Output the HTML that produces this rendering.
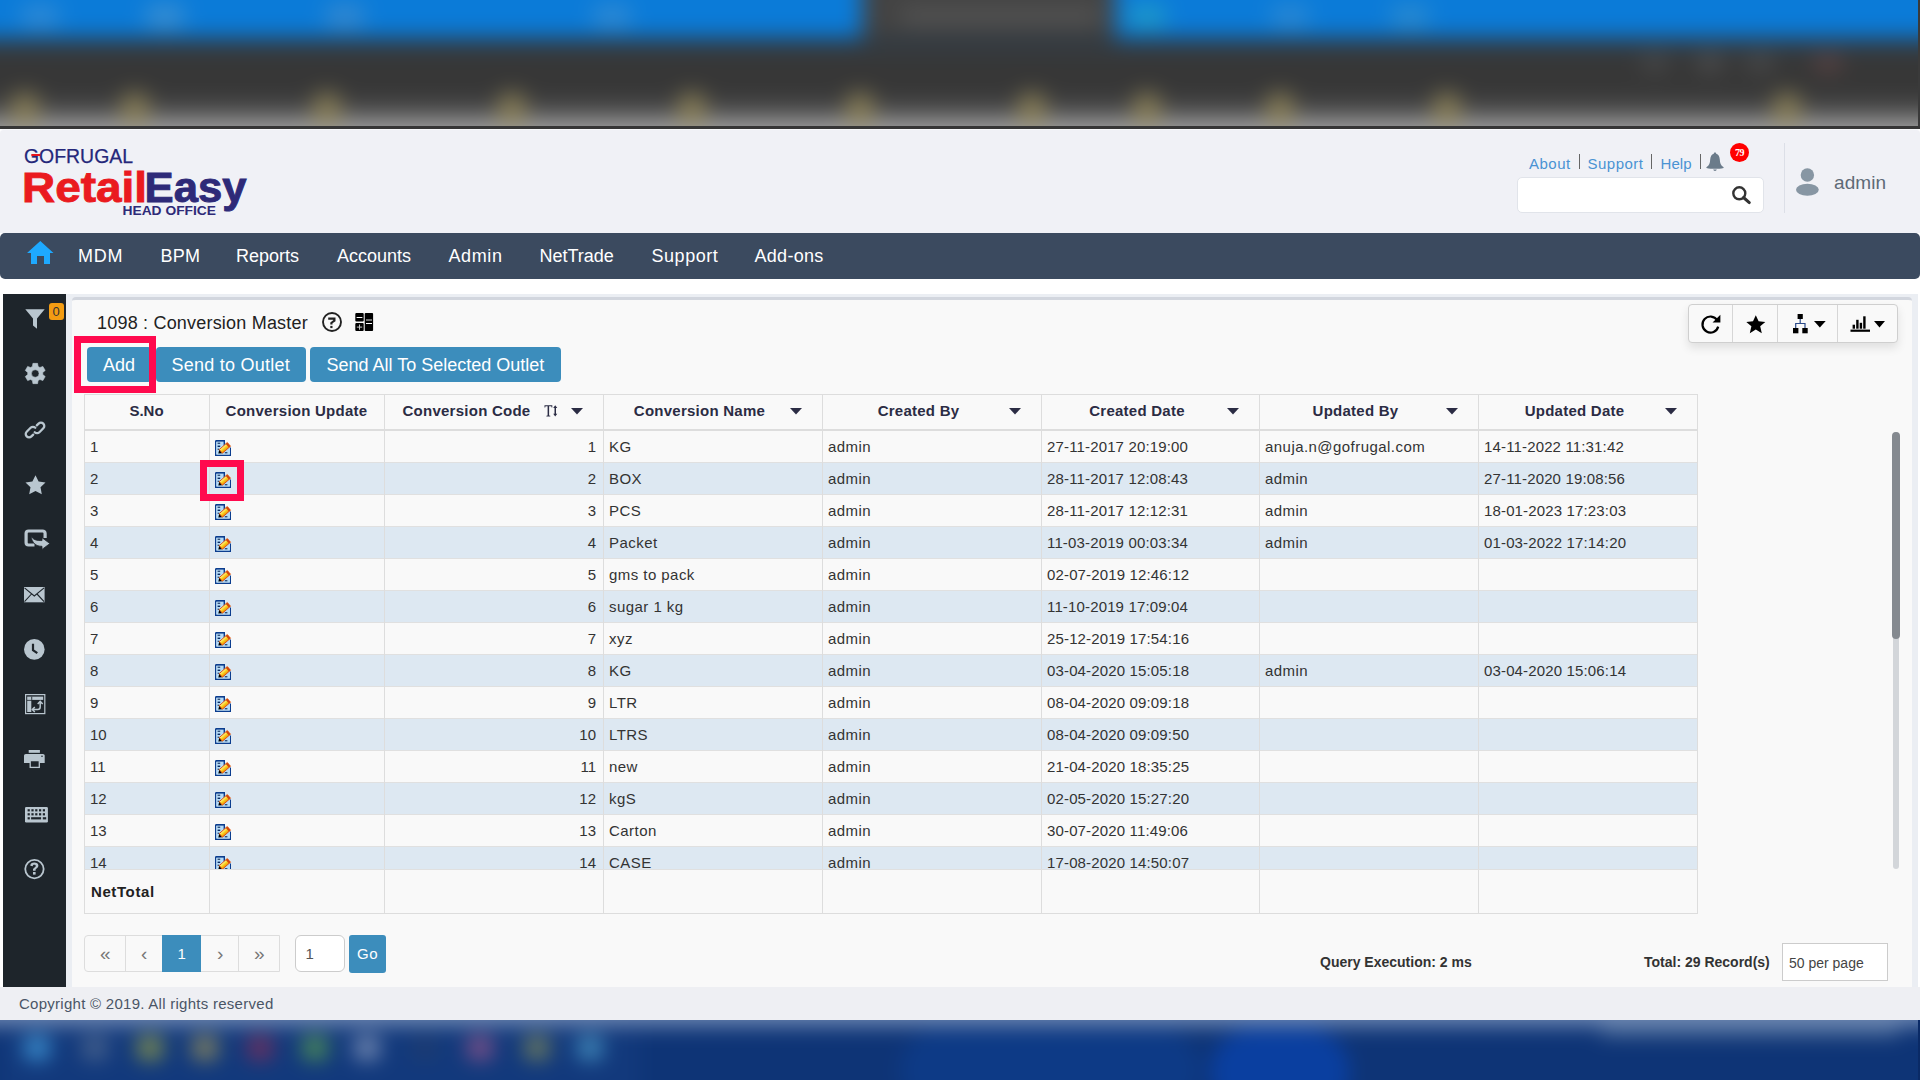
<!DOCTYPE html>
<html><head><meta charset="utf-8">
<style>
*{box-sizing:border-box}
html,body{margin:0;padding:0}
body{width:1920px;height:1080px;overflow:hidden;position:relative;background:#fff;font-family:"Liberation Sans",sans-serif;color:#333}
.abs{position:absolute}
.t{position:absolute;white-space:nowrap}
svg.abs{overflow:visible}
#top{position:absolute;left:0;top:0;width:1920px;height:126px;overflow:hidden;background:#3d3d3d}
#topin{position:absolute;left:-60px;top:-60px;width:2040px;height:246px;filter:blur(11px)}
#topin div{position:absolute}
#topline{position:absolute;left:0;top:126px;width:1920px;height:3px;background:#363636}
#topframe{position:absolute;left:1918px;top:0;width:2px;height:126px;background:#3a3a3a}
#hdrw{position:absolute;left:0;top:129px;width:1920px;height:104px;background:#fff}
#hdr{position:absolute;left:0;top:129px;width:1920px;height:104px;background:#f0f1f6;border-top:1px solid #f9fafc;border-radius:4px 4px 0 0}
#nav{position:absolute;left:0;top:233px;width:1920px;height:46px;background:#3b4a5f;border-radius:5px}
#side{position:absolute;left:3px;top:294px;width:63px;height:693px;background:#1e252b}
#gut{position:absolute;left:66px;top:294px;width:1852px;height:693px;background:#ebeef3}
#card{position:absolute;left:72px;top:297px;width:1840px;height:690px;background:#f9f9f9;border-top:3px solid #d2d6de;border-radius:4px 4px 0 0}
#foot{position:absolute;left:0;top:987px;width:1920px;height:33px;background:#eeeff3}
#task{position:absolute;left:0;top:1020px;width:1920px;height:60px;overflow:hidden;background:#0c3a85}
#taskin{position:absolute;left:-60px;top:-40px;width:2040px;height:160px;filter:blur(10px)}
#taskin div{position:absolute}
.btn{position:absolute;top:347px;height:35px;background:#3c8dbc;border-radius:4px}
.redbox{position:absolute;border:7px solid #ff0a4e;z-index:10}
#tbl{position:absolute;left:84px;top:394px;width:1614px;height:475px}
.bd{position:absolute;background:#ddd;z-index:3}
#thead{position:absolute;left:0;top:0;width:1614px;height:37px;border-bottom:2px solid #ddd}
.th{position:absolute;height:18px;line-height:15px;text-align:center;font-weight:bold;font-size:15px;color:#2b2c44;white-space:nowrap}
.sorti{display:inline-block;margin-left:14px;vertical-align:top;margin-top:1px}
.caret{position:absolute;fill:#2b2c44}
.vl{position:absolute;top:0;width:1px;height:35px;background:#ddd}
#tbody{position:absolute;left:0;top:37px;width:1614px;height:438px;overflow:hidden}
.tr{position:absolute;left:0;width:1614px;height:32px;background:#f9f9f9;border-bottom:1px solid #e0e0e0}
.tr.alt{background:#dde8f2}
.tr .t{color:#333}
.edit{position:absolute}
.vl2{position:absolute;top:0;width:1px;height:438px;background:#ddd;z-index:2}
#tfoot{position:absolute;left:84px;top:869px;width:1614px;height:45px;border:1px solid #ddd;border-top:1px solid #e0e0e0;background:#f9f9f9}
.vl3{position:absolute;top:0;width:1px;height:43px;background:#ddd}
.pg{position:absolute;top:935px;height:37px;border:1px solid #ddd;background:#f9f9f9}
</style></head><body>
<svg width="0" height="0" style="position:absolute">
 <defs>
  <linearGradient id="pg" x1="0" y1="-2.4" x2="0" y2="2.4" gradientUnits="userSpaceOnUse"><stop offset="0" stop-color="#fff6a0"/><stop offset="0.5" stop-color="#f9d21a"/><stop offset="1" stop-color="#f08a10"/></linearGradient>

 </defs>
</svg>

<!-- blurred top -->
<div id="top"><div id="topin">
<div style="left:0px;top:0px;width:2040px;height:246px;background:#3a3a3a;"></div>
<div style="left:0px;top:0px;width:922px;height:98px;background:#0b7bd8;"></div>
<div style="left:1175px;top:0px;width:925px;height:98px;background:#0b7bd8;"></div>
<div style="left:922px;top:0px;width:253px;height:95px;background:#434343;"></div>
<div style="left:960px;top:68px;width:200px;height:16px;background:#545454;border-radius:8px"></div>
<div style="left:80px;top:65px;width:40px;height:22px;background:#2f8ad6;border-radius:11px"></div>
<div style="left:205px;top:65px;width:40px;height:22px;background:#3a8fd2;border-radius:11px"></div>
<div style="left:385px;top:65px;width:40px;height:22px;background:#3589d0;border-radius:11px"></div>
<div style="left:652px;top:65px;width:40px;height:22px;background:#2f8ad4;border-radius:11px"></div>
<div style="left:1187px;top:65px;width:40px;height:22px;background:#1f9ac8;border-radius:11px"></div>
<div style="left:1450px;top:65px;width:40px;height:22px;background:#2a8ad0;border-radius:11px"></div>
<div style="left:1330px;top:65px;width:40px;height:22px;background:#2a88d4;border-radius:11px"></div>
<div style="left:0px;top:98px;width:2040px;height:12px;background:#2e3a45;"></div>
<div style="left:0px;top:120px;width:2040px;height:30px;background:#363636;"></div>
<div style="left:0px;top:160px;width:2040px;height:26px;background:linear-gradient(#3c3c3c,#555 50%,#9a9a9a);"></div>
<div style="left:0px;top:186px;width:2040px;height:60px;background:#a4a4a4;"></div>
<div style="left:71px;top:152px;width:28px;height:36px;background:#857b55;border-radius:14px"></div>
<div style="left:181px;top:152px;width:28px;height:36px;background:#857b55;border-radius:14px"></div>
<div style="left:373px;top:152px;width:28px;height:36px;background:#857b55;border-radius:14px"></div>
<div style="left:558px;top:152px;width:28px;height:36px;background:#857b55;border-radius:14px"></div>
<div style="left:738px;top:152px;width:28px;height:36px;background:#857b55;border-radius:14px"></div>
<div style="left:906px;top:152px;width:28px;height:36px;background:#857b55;border-radius:14px"></div>
<div style="left:1078px;top:152px;width:28px;height:36px;background:#857b55;border-radius:14px"></div>
<div style="left:1193px;top:152px;width:28px;height:36px;background:#857b55;border-radius:14px"></div>
<div style="left:1326px;top:152px;width:28px;height:36px;background:#857b55;border-radius:14px"></div>
<div style="left:1493px;top:152px;width:28px;height:36px;background:#857b55;border-radius:14px"></div>
<div style="left:1833px;top:152px;width:28px;height:36px;background:#857b55;border-radius:14px"></div>
<div style="left:1701px;top:115px;width:28px;height:16px;background:#4a4a4a;border-radius:8px"></div>
<div style="left:1756px;top:115px;width:28px;height:16px;background:#505050;border-radius:8px"></div>
<div style="left:1806px;top:115px;width:28px;height:16px;background:#4c4c4c;border-radius:8px"></div>
<div style="left:1874px;top:115px;width:28px;height:16px;background:#5e4444;border-radius:8px"></div>
</div></div>
<div id="topline"></div><div id="topframe"></div>

<!-- header -->
<div id="hdrw"></div>
<div id="hdr">
<svg class="abs" style="left:0;top:0" width="300" height="105" viewBox="0 130 300 105">
 <text x="24" y="163" font-family="Liberation Sans" font-size="20.5" textLength="109" lengthAdjust="spacingAndGlyphs" fill="#24277a" stroke="#24277a" stroke-width="0.25">GOFRUGAL</text>
 <rect x="31.3" y="154" width="9" height="2" fill="#e8141b"/>
 <text x="22" y="202" font-family="Liberation Sans" font-weight="bold" font-size="42.5" textLength="125" lengthAdjust="spacingAndGlyphs" fill="#ea1a1f" stroke="#ea1a1f" stroke-width="0.9">Retail</text>
 <text x="144.5" y="202" font-family="Liberation Sans" font-weight="bold" font-size="42.5" textLength="102" lengthAdjust="spacingAndGlyphs" fill="#2e2a78" stroke="#2e2a78" stroke-width="0.9">Easy</text>
 <text x="122.5" y="214.7" font-family="Liberation Sans" font-weight="bold" font-size="12.5" textLength="93.5" lengthAdjust="spacingAndGlyphs" fill="#2e2a78">HEAD OFFICE</text>
</svg>
<div class="t" style="left:1529px;top:26.00px;font-size:15px;line-height:15px;color:#4a93d3;font-weight:400;letter-spacing:0.5px">About</div>
<div class="t" style="left:1587.5px;top:26.00px;font-size:15px;line-height:15px;color:#4a93d3;font-weight:400;letter-spacing:0.5px">Support</div>
<div class="t" style="left:1660.5px;top:26.00px;font-size:15px;line-height:15px;color:#4a93d3;font-weight:400;letter-spacing:0.1px">Help</div>
<div class="abs" style="left:1579px;top:24px;width:1px;height:15px;background:#666"></div>
<div class="abs" style="left:1651px;top:24px;width:1px;height:15px;background:#666"></div>
<div class="abs" style="left:1700px;top:24px;width:1px;height:15px;background:#666"></div>
<svg class="abs" style="left:1706px;top:22px" width="18" height="19" viewBox="0 0 18 19"><path d="M9 0.5C9.8 0.5 10.2 1 10.2 1.8C12.6 2.3 13.6 4.6 13.8 7.5C14 11 14.6 13.2 17.6 15.2V15.9C15 16.5 12 16.7 9 16.7C6 16.7 3 16.5 0.4 15.9V15.2C3.4 13.2 4 11 4.2 7.5C4.4 4.6 5.4 2.3 7.8 1.8C7.8 1 8.2 0.5 9 0.5Z M7.2 17.5H10.8C10.6 18.3 9.9 18.9 9 18.9C8.1 18.9 7.4 18.3 7.2 17.5Z" fill="#6b7b8a"/></svg>
<div class="abs" style="left:1730px;top:13px;width:19px;height:19px;border-radius:50%;background:#ff0000"></div>
<div class="t" style="left:1735px;top:17.73px;font-size:10px;line-height:10px;color:#fff;font-weight:700;letter-spacing:-0.6px;font-family:'Liberation Serif',serif">79</div>
<div class="abs" style="left:1517px;top:47px;width:247px;height:36px;background:#fff;border:1px solid #e1e4ea;border-radius:5px"></div>
<svg class="abs" style="left:1732px;top:56px" width="19" height="18" viewBox="0 0 19 18"><circle cx="7.3" cy="7.3" r="6" fill="none" stroke="#333" stroke-width="2.4"/><path d="M11.5 11.5L17.3 16.6" stroke="#333" stroke-width="3" stroke-linecap="round"/></svg>
<div class="abs" style="left:1784px;top:13px;width:1px;height:70px;background:#dcdfe7"></div>
<svg class="abs" style="left:1795px;top:37px" width="25" height="30" viewBox="0 0 25 30"><circle cx="12.4" cy="8" r="6.7" fill="#8796a3"/><ellipse cx="12.4" cy="22.8" rx="11.4" ry="6" fill="#8796a3"/></svg>
<div class="t" style="left:1834px;top:42.67px;font-size:19px;line-height:19px;color:#5e6a77;font-weight:400;letter-spacing:0.1px">admin</div>
</div>

<div id="nav">
 <svg class="abs" style="left:27px;top:8px" width="27" height="24" viewBox="0 0 27 24"><path d="M13.3 0 L26.5 12 L23 12 L23 23 L17 23 L17 15 L10 15 L10 23 L4 23 L4 12 L0 12 Z" fill="#1ea9ff"/></svg>
<div class="t" style="left:78px;top:14.26px;font-size:18px;line-height:18px;color:#fff;font-weight:400;letter-spacing:0.8px">MDM</div>
<div class="t" style="left:160.5px;top:14.26px;font-size:18px;line-height:18px;color:#fff;font-weight:400;letter-spacing:0.3px">BPM</div>
<div class="t" style="left:236px;top:14.26px;font-size:18px;line-height:18px;color:#fff;font-weight:400;letter-spacing:0px">Reports</div>
<div class="t" style="left:337px;top:14.26px;font-size:18px;line-height:18px;color:#fff;font-weight:400;letter-spacing:0px">Accounts</div>
<div class="t" style="left:448.5px;top:14.26px;font-size:18px;line-height:18px;color:#fff;font-weight:400;letter-spacing:0.6px">Admin</div>
<div class="t" style="left:539.5px;top:14.26px;font-size:18px;line-height:18px;color:#fff;font-weight:400;letter-spacing:0px">NetTrade</div>
<div class="t" style="left:651.5px;top:14.26px;font-size:18px;line-height:18px;color:#fff;font-weight:400;letter-spacing:0.55px">Support</div>
<div class="t" style="left:754.5px;top:14.26px;font-size:18px;line-height:18px;color:#fff;font-weight:400;letter-spacing:0.3px">Add-ons</div>
</div>

<div id="side">
<svg class="abs" style="left:22px;top:15px" width="20" height="20" viewBox="0 0 20 20"><path d="M0.3 0.3H19.7L12 9.5V19.7L8 16.5V9.5Z" fill="#b9c6cf"/></svg>
<div class="abs" style="left:46px;top:9px;width:15px;height:17px;border-radius:3px;background:#f39c12"></div>
<div class="t" style="left:49.5px;top:11.00px;font-size:13px;line-height:13px;color:#333;font-weight:400;">0</div>
<svg class="abs" style="left:21.5px;top:69.30000000000001px" width="21" height="21" viewBox="0 0 21 21"><path d="M7.40 3.45 L7.91 0.37 L12.59 0.37 L13.10 3.45 L14.93 4.51 L17.86 3.41 L20.20 7.46 L17.78 9.44 L17.78 11.56 L20.20 13.54 L17.86 17.59 L14.93 16.49 L13.10 17.55 L12.59 20.63 L7.91 20.63 L7.40 17.55 L5.57 16.49 L2.64 17.59 L0.30 13.54 L2.72 11.56 L2.72 9.44 L0.30 7.46 L2.64 3.41 L5.57 4.51 Z M10.25 6.7A3.8 3.8 0 1 0 10.25 14.3A3.8 3.8 0 1 0 10.25 6.7Z" fill="#b9c6cf" fill-rule="evenodd" stroke="#b9c6cf" stroke-width="0.6" stroke-linejoin="round"/></svg>
<svg class="abs" style="left:21px;top:124.5px" width="22" height="22" viewBox="0 0 22 22"><g fill="none" stroke="#b9c6cf" stroke-width="2.3" stroke-linecap="round"><path d="M9.2 15.6L7.4 17.4A3.3 3.3 0 0 1 2.7 12.7L6.6 8.8A3.3 3.3 0 0 1 11.3 8.8" /><path d="M12.8 6.4L14.6 4.6A3.3 3.3 0 0 1 19.3 9.3L15.4 13.2A3.3 3.3 0 0 1 10.7 13.2"/></g></svg>
<svg class="abs" style="left:21.5px;top:180.5px" width="21" height="20" viewBox="0 0 21 20"><path d="M10.5 0.3L13.6 6.6L20.5 7.5L15.5 12.3L16.8 19.3L10.5 16L4.2 19.3L5.5 12.3L0.5 7.5L7.4 6.6Z" fill="#b9c6cf"/></svg>
<svg class="abs" style="left:21px;top:234.5px" width="27" height="22" viewBox="0 0 27 22"><path d="M10.5 16H4.6A2.5 2.5 0 0 1 2.1 13.5V4.5A2.5 2.5 0 0 1 4.6 2H18.6A2.5 2.5 0 0 1 21.1 4.5V9" fill="none" stroke="#b9c6cf" stroke-width="3.2"/><path d="M7 7C8.8 10.8 12.5 11.6 18 11.6V8.7L25.9 14.6L18 20.4V17.3C12 17.3 8 14 7 7Z" fill="#b9c6cf" stroke="#1e252b" stroke-width="0.8"/></svg>
<svg class="abs" style="left:21.4px;top:292.5px" width="21" height="15.5" viewBox="0 0 21 15.5"><rect x="0" y="0" width="20.6" height="15.3" fill="#b9c6cf"/><path d="M0.5 0.8L10.3 9L20.1 0.8 M0.5 14.6L7.5 7 M20.1 14.6L13 7" stroke="#1e252b" stroke-width="1.1" fill="none"/></svg>
<svg class="abs" style="left:21.4px;top:344.6px" width="21" height="21" viewBox="0 0 21 21"><circle cx="10.3" cy="10.4" r="10.3" fill="#b9c6cf"/><path d="M9 4.8V11.2L13.3 14.2" stroke="#1e252b" stroke-width="2.2" fill="none"/></svg>
<svg class="abs" style="left:21.7px;top:400px" width="21" height="21" viewBox="0 0 21 21"><rect x="0.6" y="0.6" width="19.2" height="19" fill="none" stroke="#b9c6cf" stroke-width="1.2"/><rect x="2.2" y="2.6" width="16" height="3.3" fill="#b9c6cf"/><rect x="6.3" y="2.6" width="0.9" height="3.3" fill="#1e252b"/><rect x="2.2" y="6.7" width="4.1" height="11.3" fill="#b9c6cf"/><path d="M15.2 8.5V13Q15.2 15.5 12.7 15.5H8 M12.7 10L15.2 7.4L17.7 10 M9.8 13L7.3 15.5L9.8 18" fill="none" stroke="#b9c6cf" stroke-width="1.5"/></svg>
<svg class="abs" style="left:21.4px;top:456px" width="21" height="19" viewBox="0 0 21 19"><rect x="4.7" y="0" width="11.2" height="2.8" fill="#b9c6cf"/><path d="M1.8 4H18.9C19.9 4 20.7 4.8 20.7 5.8V13.1H0V5.8C0 4.8 0.8 4 1.8 4Z" fill="#b9c6cf"/><rect x="6.2" y="10.6" width="9.1" height="6.8" fill="#1e252b" stroke="#b9c6cf" stroke-width="1.3"/><circle cx="18" cy="6.2" r="0.8" fill="#1e252b"/></svg>
<svg class="abs" style="left:21.6px;top:512.7px" width="23" height="16" viewBox="0 0 23 16"><rect x="0" y="0" width="22.9" height="15.4" rx="1.2" fill="#b9c6cf"/><rect x="2.6" y="2.2" width="2.2" height="2.2" fill="#1e252b"/><rect x="6.4" y="2.2" width="2.2" height="2.2" fill="#1e252b"/><rect x="10.2" y="2.2" width="2.2" height="2.2" fill="#1e252b"/><rect x="14.0" y="2.2" width="2.2" height="2.2" fill="#1e252b"/><rect x="17.8" y="2.2" width="2.2" height="2.2" fill="#1e252b"/><rect x="2.6" y="6.2" width="2.2" height="2.2" fill="#1e252b"/><rect x="6.4" y="6.2" width="2.2" height="2.2" fill="#1e252b"/><rect x="10.2" y="6.2" width="2.2" height="2.2" fill="#1e252b"/><rect x="14.0" y="6.2" width="2.2" height="2.2" fill="#1e252b"/><rect x="17.8" y="6.2" width="2.2" height="2.2" fill="#1e252b"/><rect x="2.6" y="10.2" width="2.2" height="2.2" fill="#1e252b"/><rect x="6.1" y="10.2" width="10" height="2.2" fill="#1e252b"/><rect x="17.8" y="10.2" width="3.4" height="2.2" fill="#1e252b"/></svg>
<svg class="abs" style="left:21.3px;top:565px" width="21" height="21" viewBox="0 0 21 21"><circle cx="10.45" cy="10.1" r="9.2" fill="none" stroke="#b9c6cf" stroke-width="1.8"/><path d="M6.3 6.8C6.3 4.8 7.9 3.6 10.3 3.6C12.7 3.6 14.4 4.8 14.4 6.8C14.4 8.8 12.2 9.4 11.6 10.6V11.8H9V10.2C9.6 8.4 11.8 8 11.8 6.9C11.8 6.2 11.2 5.8 10.3 5.8C9.4 5.8 8.8 6.3 8.8 7.2Z" fill="#b9c6cf"/><rect x="9" y="13" width="2.6" height="2.6" fill="#b9c6cf"/></svg>
</div>
<div id="gut"></div>
<div id="card"></div>

<div class="t" style="left:97px;top:313.76px;font-size:18px;line-height:18px;color:#222;font-weight:400;letter-spacing:0.2px">1098 : Conversion Master</div>
<svg class="abs" style="left:322px;top:312px" width="20" height="20" viewBox="0 0 20 20"><circle cx="10" cy="10" r="9" fill="none" stroke="#222" stroke-width="1.9"/><path d="M6.2 5.6H13.5V9.2L10.5 11.3V12.6H8.3V10.4L11.2 8.3V7.8H6.2Z" fill="#222"/><rect x="8.3" y="13.9" width="2.2" height="2.2" fill="#222"/></svg>
<svg class="abs" style="left:354.5px;top:313px" width="19" height="18" viewBox="0 0 19 18"><rect x="0.3" y="0.1" width="8.4" height="8.5" rx="1" fill="#000"/><rect x="0.3" y="10" width="8.4" height="8" rx="1" fill="#000"/><rect x="9.7" y="0.1" width="8.4" height="17.9" rx="1" fill="#000"/><rect x="1.6" y="4" width="5.8" height="1" fill="#fff"/><rect x="1.8" y="13.6" width="5.4" height="1" fill="#ccc"/><rect x="4" y="11.5" width="1" height="5.2" fill="#ccc"/><rect x="11" y="6.5" width="6" height="1" fill="#ddd"/><rect x="11" y="10" width="6" height="1" fill="#fff"/></svg>
<div class="btn" style="left:87px;width:65px"></div>
<div class="t" style="left:103px;top:355.56px;font-size:18px;line-height:18px;color:#fff;font-weight:400;">Add</div>
<div class="btn" style="left:156px;width:150px"></div>
<div class="t" style="left:171.5px;top:355.56px;font-size:18px;line-height:18px;color:#fff;font-weight:400;letter-spacing:0.25px">Send to Outlet</div>
<div class="btn" style="left:310px;width:251px"></div>
<div class="t" style="left:326.5px;top:355.56px;font-size:18px;line-height:18px;color:#fff;font-weight:400;">Send All To Selected Outlet</div>
<div class="redbox" style="left:74px;top:336px;width:82px;height:57px"></div>
<div class="abs" style="left:1688px;top:304px;width:210px;height:39px;border:1px solid #cfcfcf;border-radius:4px;background:#f9f9f9;box-shadow:0 5px 10px rgba(0,0,0,0.10)"></div>
<div class="abs" style="left:1732px;top:305px;width:1px;height:37px;background:#d6d6d6"></div>
<div class="abs" style="left:1777px;top:305px;width:1px;height:37px;background:#d6d6d6"></div>
<div class="abs" style="left:1837px;top:305px;width:1px;height:37px;background:#d6d6d6"></div>
<svg class="abs" style="left:1701px;top:314px" width="20" height="20" viewBox="0 0 20 20"><path d="M16.2 6.2A8 8 0 1 0 17.2 12.6" fill="none" stroke="#000" stroke-width="2.2"/><path d="M19.4 0.8V8.6H11.6Z" fill="#000"/></svg>
<svg class="abs" style="left:1745.5px;top:314.5px" width="20" height="19" viewBox="0 0 20 19"><path d="M9.8 0.3L12.6 6.3L19.3 6.9L14.2 11.3L15.8 18.2L9.8 14.6L3.8 18.2L5.4 11.3L0.3 6.9L7 6.3Z" fill="#000"/></svg>
<svg class="abs" style="left:1793px;top:314px" width="15" height="20" viewBox="0 0 15 20"><rect x="4.6" y="0" width="5.2" height="5" fill="#000"/><rect x="0" y="14" width="5.4" height="5.3" fill="#000"/><rect x="9.3" y="14" width="5.4" height="5.3" fill="#000"/><path d="M7.2 5V9.5M2.7 14V9.5H12V14" stroke="#2a4a8a" stroke-width="1.2" fill="none"/></svg>
<svg class="abs" style="left:1813.5px;top:321px" width="12" height="7" viewBox="0 0 12 7"><path d="M0 0H11.7L5.85 6.6Z" fill="#000"/></svg>
<svg class="abs" style="left:1850px;top:316px" width="21" height="16" viewBox="0 0 21 16"><rect x="0.5" y="13.6" width="19.5" height="2.2" fill="#000"/><rect x="2.6" y="8.7" width="2.4" height="4" fill="#000"/><rect x="6.2" y="3.8" width="2.4" height="8.9" fill="#000"/><rect x="9.7" y="6.8" width="2.4" height="5.9" fill="#000"/><rect x="13.2" y="0.3" width="2.4" height="12.4" fill="#000"/></svg>
<svg class="abs" style="left:1874px;top:321px" width="12" height="7" viewBox="0 0 12 7"><path d="M0 0H11L5.5 6.6Z" fill="#000"/></svg>

<div id="tbl">
 <div id="thead">
<div class="th" style="left:0px;width:125px;top:9.00px;letter-spacing:0px">S.No</div>
<div class="th" style="left:125px;width:175px;top:9.00px;letter-spacing:0.25px">Conversion Update</div>
<div class="th" style="left:300px;width:193px;top:9.00px;letter-spacing:0.25px">Conversion Code<span class="sorti"><svg width="14" height="12" viewBox="0 0 14 12"><path d="M0.5 0.3H8.3V2.6H7.6L7.3 1.3H5.1V10.5L6.3 10.8V11.5H2.4V10.8L3.6 10.5V1.3H1.5L1.2 2.6H0.5Z M11.2 0.3L13.3 3H12V8.7H13.3L11.2 11.5L9.2 8.7H10.5V3H9.2Z" fill="#2b2c44"/></svg></span></div>
<svg class="caret" style="left:487px;top:14.4px" width="12" height="7" viewBox="0 0 12 7"><path d="M0 0H12L6 6.5Z"/></svg>
<div class="th" style="left:519px;width:193px;top:9.00px;letter-spacing:0.25px">Conversion Name</div>
<svg class="caret" style="left:706px;top:14.4px" width="12" height="7" viewBox="0 0 12 7"><path d="M0 0H12L6 6.5Z"/></svg>
<div class="th" style="left:738px;width:193px;top:9.00px;letter-spacing:0.25px">Created By</div>
<svg class="caret" style="left:925px;top:14.4px" width="12" height="7" viewBox="0 0 12 7"><path d="M0 0H12L6 6.5Z"/></svg>
<div class="th" style="left:957px;width:192px;top:9.00px;letter-spacing:0.25px">Created Date</div>
<svg class="caret" style="left:1143px;top:14.4px" width="12" height="7" viewBox="0 0 12 7"><path d="M0 0H12L6 6.5Z"/></svg>
<div class="th" style="left:1175px;width:193px;top:9.00px;letter-spacing:0.25px">Updated By</div>
<svg class="caret" style="left:1362px;top:14.4px" width="12" height="7" viewBox="0 0 12 7"><path d="M0 0H12L6 6.5Z"/></svg>
<div class="th" style="left:1394px;width:193px;top:9.00px;letter-spacing:0.25px">Updated Date</div>
<svg class="caret" style="left:1581px;top:14.4px" width="12" height="7" viewBox="0 0 12 7"><path d="M0 0H12L6 6.5Z"/></svg>
<div class="vl" style="left:125px"></div>
<div class="vl" style="left:300px"></div>
<div class="vl" style="left:519px"></div>
<div class="vl" style="left:738px"></div>
<div class="vl" style="left:957px"></div>
<div class="vl" style="left:1175px"></div>
<div class="vl" style="left:1394px"></div>
 </div>
 <div class="bd" style="left:0;top:0;width:1614px;height:1px"></div>
 <div class="bd" style="left:0;top:0;width:1px;height:475px"></div>
 <div class="bd" style="left:1613px;top:0;width:1px;height:475px"></div>
 <div id="tbody">
<div class="tr" style="top:0px"><div class="t" style="left:6px;top:8.10px;font-size:15px;line-height:15px;color:#333;font-weight:400;">1</div><svg class="edit" style="left:131px;top:9px" width="17" height="17" viewBox="0 0 17 17" overflow="visible"><path d="M0.7 0.7H9.3 M0.7 0.7V15.3H15.3V7.5" fill="none" stroke="#0b3d8e" stroke-width="1.4"/>   <path d="M1.4 1.4H9.3L15 7.5V14.6H1.4Z" fill="#b4dbf7"/>   <path d="M0.7 0.7H9.3V6" fill="none" stroke="#0b3d8e" stroke-width="1.4"/>   <rect x="2.6" y="2.6" width="2.6" height="1.4" fill="#33507a"/>   <rect x="2.6" y="5.6" width="2.6" height="1.4" fill="#0b2a60"/>   <rect x="2.6" y="8.6" width="1.6" height="1.4" fill="#33507a"/>   <rect x="9.8" y="12" width="2.6" height="1.4" fill="#33507a"/>   <g transform="translate(3.3 13.6) rotate(-41)">    <path d="M0 0L3.4 -2.4V2.4Z" fill="#000"/>    <rect x="3.4" y="-2.4" width="10.6" height="4.8" fill="url(#pg)" stroke="#e0520e" stroke-width="0.9"/>    <rect x="12" y="-2.4" width="2" height="4.8" fill="#d2450c"/>   </g></svg><div class="t" style="right:1102px;top:8.10px;font-size:15px;line-height:15px;color:#333;font-weight:400;">1</div><div class="t" style="left:525px;top:8.10px;font-size:15px;line-height:15px;color:#333;font-weight:400;letter-spacing:0.45px">KG</div><div class="t" style="left:744px;top:8.10px;font-size:15px;line-height:15px;color:#333;font-weight:400;letter-spacing:0.45px">admin</div><div class="t" style="left:963px;top:8.10px;font-size:15px;line-height:15px;color:#333;font-weight:400;letter-spacing:0.15px">27-11-2017 20:19:00</div><div class="t" style="left:1181px;top:8.10px;font-size:15px;line-height:15px;color:#333;font-weight:400;letter-spacing:0.45px">anuja.n@gofrugal.com</div><div class="t" style="left:1400px;top:8.10px;font-size:15px;line-height:15px;color:#333;font-weight:400;letter-spacing:0.15px">14-11-2022 11:31:42</div></div>
<div class="tr alt" style="top:32px"><div class="t" style="left:6px;top:8.10px;font-size:15px;line-height:15px;color:#333;font-weight:400;">2</div><svg class="edit" style="left:131px;top:9px" width="17" height="17" viewBox="0 0 17 17" overflow="visible"><path d="M0.7 0.7H9.3 M0.7 0.7V15.3H15.3V7.5" fill="none" stroke="#0b3d8e" stroke-width="1.4"/>   <path d="M1.4 1.4H9.3L15 7.5V14.6H1.4Z" fill="#b4dbf7"/>   <path d="M0.7 0.7H9.3V6" fill="none" stroke="#0b3d8e" stroke-width="1.4"/>   <rect x="2.6" y="2.6" width="2.6" height="1.4" fill="#33507a"/>   <rect x="2.6" y="5.6" width="2.6" height="1.4" fill="#0b2a60"/>   <rect x="2.6" y="8.6" width="1.6" height="1.4" fill="#33507a"/>   <rect x="9.8" y="12" width="2.6" height="1.4" fill="#33507a"/>   <g transform="translate(3.3 13.6) rotate(-41)">    <path d="M0 0L3.4 -2.4V2.4Z" fill="#000"/>    <rect x="3.4" y="-2.4" width="10.6" height="4.8" fill="url(#pg)" stroke="#e0520e" stroke-width="0.9"/>    <rect x="12" y="-2.4" width="2" height="4.8" fill="#d2450c"/>   </g></svg><div class="t" style="right:1102px;top:8.10px;font-size:15px;line-height:15px;color:#333;font-weight:400;">2</div><div class="t" style="left:525px;top:8.10px;font-size:15px;line-height:15px;color:#333;font-weight:400;letter-spacing:0.45px">BOX</div><div class="t" style="left:744px;top:8.10px;font-size:15px;line-height:15px;color:#333;font-weight:400;letter-spacing:0.45px">admin</div><div class="t" style="left:963px;top:8.10px;font-size:15px;line-height:15px;color:#333;font-weight:400;letter-spacing:0.15px">28-11-2017 12:08:43</div><div class="t" style="left:1181px;top:8.10px;font-size:15px;line-height:15px;color:#333;font-weight:400;letter-spacing:0.45px">admin</div><div class="t" style="left:1400px;top:8.10px;font-size:15px;line-height:15px;color:#333;font-weight:400;letter-spacing:0.15px">27-11-2020 19:08:56</div></div>
<div class="tr" style="top:64px"><div class="t" style="left:6px;top:8.10px;font-size:15px;line-height:15px;color:#333;font-weight:400;">3</div><svg class="edit" style="left:131px;top:9px" width="17" height="17" viewBox="0 0 17 17" overflow="visible"><path d="M0.7 0.7H9.3 M0.7 0.7V15.3H15.3V7.5" fill="none" stroke="#0b3d8e" stroke-width="1.4"/>   <path d="M1.4 1.4H9.3L15 7.5V14.6H1.4Z" fill="#b4dbf7"/>   <path d="M0.7 0.7H9.3V6" fill="none" stroke="#0b3d8e" stroke-width="1.4"/>   <rect x="2.6" y="2.6" width="2.6" height="1.4" fill="#33507a"/>   <rect x="2.6" y="5.6" width="2.6" height="1.4" fill="#0b2a60"/>   <rect x="2.6" y="8.6" width="1.6" height="1.4" fill="#33507a"/>   <rect x="9.8" y="12" width="2.6" height="1.4" fill="#33507a"/>   <g transform="translate(3.3 13.6) rotate(-41)">    <path d="M0 0L3.4 -2.4V2.4Z" fill="#000"/>    <rect x="3.4" y="-2.4" width="10.6" height="4.8" fill="url(#pg)" stroke="#e0520e" stroke-width="0.9"/>    <rect x="12" y="-2.4" width="2" height="4.8" fill="#d2450c"/>   </g></svg><div class="t" style="right:1102px;top:8.10px;font-size:15px;line-height:15px;color:#333;font-weight:400;">3</div><div class="t" style="left:525px;top:8.10px;font-size:15px;line-height:15px;color:#333;font-weight:400;letter-spacing:0.45px">PCS</div><div class="t" style="left:744px;top:8.10px;font-size:15px;line-height:15px;color:#333;font-weight:400;letter-spacing:0.45px">admin</div><div class="t" style="left:963px;top:8.10px;font-size:15px;line-height:15px;color:#333;font-weight:400;letter-spacing:0.15px">28-11-2017 12:12:31</div><div class="t" style="left:1181px;top:8.10px;font-size:15px;line-height:15px;color:#333;font-weight:400;letter-spacing:0.45px">admin</div><div class="t" style="left:1400px;top:8.10px;font-size:15px;line-height:15px;color:#333;font-weight:400;letter-spacing:0.15px">18-01-2023 17:23:03</div></div>
<div class="tr alt" style="top:96px"><div class="t" style="left:6px;top:8.10px;font-size:15px;line-height:15px;color:#333;font-weight:400;">4</div><svg class="edit" style="left:131px;top:9px" width="17" height="17" viewBox="0 0 17 17" overflow="visible"><path d="M0.7 0.7H9.3 M0.7 0.7V15.3H15.3V7.5" fill="none" stroke="#0b3d8e" stroke-width="1.4"/>   <path d="M1.4 1.4H9.3L15 7.5V14.6H1.4Z" fill="#b4dbf7"/>   <path d="M0.7 0.7H9.3V6" fill="none" stroke="#0b3d8e" stroke-width="1.4"/>   <rect x="2.6" y="2.6" width="2.6" height="1.4" fill="#33507a"/>   <rect x="2.6" y="5.6" width="2.6" height="1.4" fill="#0b2a60"/>   <rect x="2.6" y="8.6" width="1.6" height="1.4" fill="#33507a"/>   <rect x="9.8" y="12" width="2.6" height="1.4" fill="#33507a"/>   <g transform="translate(3.3 13.6) rotate(-41)">    <path d="M0 0L3.4 -2.4V2.4Z" fill="#000"/>    <rect x="3.4" y="-2.4" width="10.6" height="4.8" fill="url(#pg)" stroke="#e0520e" stroke-width="0.9"/>    <rect x="12" y="-2.4" width="2" height="4.8" fill="#d2450c"/>   </g></svg><div class="t" style="right:1102px;top:8.10px;font-size:15px;line-height:15px;color:#333;font-weight:400;">4</div><div class="t" style="left:525px;top:8.10px;font-size:15px;line-height:15px;color:#333;font-weight:400;letter-spacing:0.45px">Packet</div><div class="t" style="left:744px;top:8.10px;font-size:15px;line-height:15px;color:#333;font-weight:400;letter-spacing:0.45px">admin</div><div class="t" style="left:963px;top:8.10px;font-size:15px;line-height:15px;color:#333;font-weight:400;letter-spacing:0.15px">11-03-2019 00:03:34</div><div class="t" style="left:1181px;top:8.10px;font-size:15px;line-height:15px;color:#333;font-weight:400;letter-spacing:0.45px">admin</div><div class="t" style="left:1400px;top:8.10px;font-size:15px;line-height:15px;color:#333;font-weight:400;letter-spacing:0.15px">01-03-2022 17:14:20</div></div>
<div class="tr" style="top:128px"><div class="t" style="left:6px;top:8.10px;font-size:15px;line-height:15px;color:#333;font-weight:400;">5</div><svg class="edit" style="left:131px;top:9px" width="17" height="17" viewBox="0 0 17 17" overflow="visible"><path d="M0.7 0.7H9.3 M0.7 0.7V15.3H15.3V7.5" fill="none" stroke="#0b3d8e" stroke-width="1.4"/>   <path d="M1.4 1.4H9.3L15 7.5V14.6H1.4Z" fill="#b4dbf7"/>   <path d="M0.7 0.7H9.3V6" fill="none" stroke="#0b3d8e" stroke-width="1.4"/>   <rect x="2.6" y="2.6" width="2.6" height="1.4" fill="#33507a"/>   <rect x="2.6" y="5.6" width="2.6" height="1.4" fill="#0b2a60"/>   <rect x="2.6" y="8.6" width="1.6" height="1.4" fill="#33507a"/>   <rect x="9.8" y="12" width="2.6" height="1.4" fill="#33507a"/>   <g transform="translate(3.3 13.6) rotate(-41)">    <path d="M0 0L3.4 -2.4V2.4Z" fill="#000"/>    <rect x="3.4" y="-2.4" width="10.6" height="4.8" fill="url(#pg)" stroke="#e0520e" stroke-width="0.9"/>    <rect x="12" y="-2.4" width="2" height="4.8" fill="#d2450c"/>   </g></svg><div class="t" style="right:1102px;top:8.10px;font-size:15px;line-height:15px;color:#333;font-weight:400;">5</div><div class="t" style="left:525px;top:8.10px;font-size:15px;line-height:15px;color:#333;font-weight:400;letter-spacing:0.45px">gms to pack</div><div class="t" style="left:744px;top:8.10px;font-size:15px;line-height:15px;color:#333;font-weight:400;letter-spacing:0.45px">admin</div><div class="t" style="left:963px;top:8.10px;font-size:15px;line-height:15px;color:#333;font-weight:400;letter-spacing:0.15px">02-07-2019 12:46:12</div></div>
<div class="tr alt" style="top:160px"><div class="t" style="left:6px;top:8.10px;font-size:15px;line-height:15px;color:#333;font-weight:400;">6</div><svg class="edit" style="left:131px;top:9px" width="17" height="17" viewBox="0 0 17 17" overflow="visible"><path d="M0.7 0.7H9.3 M0.7 0.7V15.3H15.3V7.5" fill="none" stroke="#0b3d8e" stroke-width="1.4"/>   <path d="M1.4 1.4H9.3L15 7.5V14.6H1.4Z" fill="#b4dbf7"/>   <path d="M0.7 0.7H9.3V6" fill="none" stroke="#0b3d8e" stroke-width="1.4"/>   <rect x="2.6" y="2.6" width="2.6" height="1.4" fill="#33507a"/>   <rect x="2.6" y="5.6" width="2.6" height="1.4" fill="#0b2a60"/>   <rect x="2.6" y="8.6" width="1.6" height="1.4" fill="#33507a"/>   <rect x="9.8" y="12" width="2.6" height="1.4" fill="#33507a"/>   <g transform="translate(3.3 13.6) rotate(-41)">    <path d="M0 0L3.4 -2.4V2.4Z" fill="#000"/>    <rect x="3.4" y="-2.4" width="10.6" height="4.8" fill="url(#pg)" stroke="#e0520e" stroke-width="0.9"/>    <rect x="12" y="-2.4" width="2" height="4.8" fill="#d2450c"/>   </g></svg><div class="t" style="right:1102px;top:8.10px;font-size:15px;line-height:15px;color:#333;font-weight:400;">6</div><div class="t" style="left:525px;top:8.10px;font-size:15px;line-height:15px;color:#333;font-weight:400;letter-spacing:0.45px">sugar 1 kg</div><div class="t" style="left:744px;top:8.10px;font-size:15px;line-height:15px;color:#333;font-weight:400;letter-spacing:0.45px">admin</div><div class="t" style="left:963px;top:8.10px;font-size:15px;line-height:15px;color:#333;font-weight:400;letter-spacing:0.15px">11-10-2019 17:09:04</div></div>
<div class="tr" style="top:192px"><div class="t" style="left:6px;top:8.10px;font-size:15px;line-height:15px;color:#333;font-weight:400;">7</div><svg class="edit" style="left:131px;top:9px" width="17" height="17" viewBox="0 0 17 17" overflow="visible"><path d="M0.7 0.7H9.3 M0.7 0.7V15.3H15.3V7.5" fill="none" stroke="#0b3d8e" stroke-width="1.4"/>   <path d="M1.4 1.4H9.3L15 7.5V14.6H1.4Z" fill="#b4dbf7"/>   <path d="M0.7 0.7H9.3V6" fill="none" stroke="#0b3d8e" stroke-width="1.4"/>   <rect x="2.6" y="2.6" width="2.6" height="1.4" fill="#33507a"/>   <rect x="2.6" y="5.6" width="2.6" height="1.4" fill="#0b2a60"/>   <rect x="2.6" y="8.6" width="1.6" height="1.4" fill="#33507a"/>   <rect x="9.8" y="12" width="2.6" height="1.4" fill="#33507a"/>   <g transform="translate(3.3 13.6) rotate(-41)">    <path d="M0 0L3.4 -2.4V2.4Z" fill="#000"/>    <rect x="3.4" y="-2.4" width="10.6" height="4.8" fill="url(#pg)" stroke="#e0520e" stroke-width="0.9"/>    <rect x="12" y="-2.4" width="2" height="4.8" fill="#d2450c"/>   </g></svg><div class="t" style="right:1102px;top:8.10px;font-size:15px;line-height:15px;color:#333;font-weight:400;">7</div><div class="t" style="left:525px;top:8.10px;font-size:15px;line-height:15px;color:#333;font-weight:400;letter-spacing:0.45px">xyz</div><div class="t" style="left:744px;top:8.10px;font-size:15px;line-height:15px;color:#333;font-weight:400;letter-spacing:0.45px">admin</div><div class="t" style="left:963px;top:8.10px;font-size:15px;line-height:15px;color:#333;font-weight:400;letter-spacing:0.15px">25-12-2019 17:54:16</div></div>
<div class="tr alt" style="top:224px"><div class="t" style="left:6px;top:8.10px;font-size:15px;line-height:15px;color:#333;font-weight:400;">8</div><svg class="edit" style="left:131px;top:9px" width="17" height="17" viewBox="0 0 17 17" overflow="visible"><path d="M0.7 0.7H9.3 M0.7 0.7V15.3H15.3V7.5" fill="none" stroke="#0b3d8e" stroke-width="1.4"/>   <path d="M1.4 1.4H9.3L15 7.5V14.6H1.4Z" fill="#b4dbf7"/>   <path d="M0.7 0.7H9.3V6" fill="none" stroke="#0b3d8e" stroke-width="1.4"/>   <rect x="2.6" y="2.6" width="2.6" height="1.4" fill="#33507a"/>   <rect x="2.6" y="5.6" width="2.6" height="1.4" fill="#0b2a60"/>   <rect x="2.6" y="8.6" width="1.6" height="1.4" fill="#33507a"/>   <rect x="9.8" y="12" width="2.6" height="1.4" fill="#33507a"/>   <g transform="translate(3.3 13.6) rotate(-41)">    <path d="M0 0L3.4 -2.4V2.4Z" fill="#000"/>    <rect x="3.4" y="-2.4" width="10.6" height="4.8" fill="url(#pg)" stroke="#e0520e" stroke-width="0.9"/>    <rect x="12" y="-2.4" width="2" height="4.8" fill="#d2450c"/>   </g></svg><div class="t" style="right:1102px;top:8.10px;font-size:15px;line-height:15px;color:#333;font-weight:400;">8</div><div class="t" style="left:525px;top:8.10px;font-size:15px;line-height:15px;color:#333;font-weight:400;letter-spacing:0.45px">KG</div><div class="t" style="left:744px;top:8.10px;font-size:15px;line-height:15px;color:#333;font-weight:400;letter-spacing:0.45px">admin</div><div class="t" style="left:963px;top:8.10px;font-size:15px;line-height:15px;color:#333;font-weight:400;letter-spacing:0.15px">03-04-2020 15:05:18</div><div class="t" style="left:1181px;top:8.10px;font-size:15px;line-height:15px;color:#333;font-weight:400;letter-spacing:0.45px">admin</div><div class="t" style="left:1400px;top:8.10px;font-size:15px;line-height:15px;color:#333;font-weight:400;letter-spacing:0.15px">03-04-2020 15:06:14</div></div>
<div class="tr" style="top:256px"><div class="t" style="left:6px;top:8.10px;font-size:15px;line-height:15px;color:#333;font-weight:400;">9</div><svg class="edit" style="left:131px;top:9px" width="17" height="17" viewBox="0 0 17 17" overflow="visible"><path d="M0.7 0.7H9.3 M0.7 0.7V15.3H15.3V7.5" fill="none" stroke="#0b3d8e" stroke-width="1.4"/>   <path d="M1.4 1.4H9.3L15 7.5V14.6H1.4Z" fill="#b4dbf7"/>   <path d="M0.7 0.7H9.3V6" fill="none" stroke="#0b3d8e" stroke-width="1.4"/>   <rect x="2.6" y="2.6" width="2.6" height="1.4" fill="#33507a"/>   <rect x="2.6" y="5.6" width="2.6" height="1.4" fill="#0b2a60"/>   <rect x="2.6" y="8.6" width="1.6" height="1.4" fill="#33507a"/>   <rect x="9.8" y="12" width="2.6" height="1.4" fill="#33507a"/>   <g transform="translate(3.3 13.6) rotate(-41)">    <path d="M0 0L3.4 -2.4V2.4Z" fill="#000"/>    <rect x="3.4" y="-2.4" width="10.6" height="4.8" fill="url(#pg)" stroke="#e0520e" stroke-width="0.9"/>    <rect x="12" y="-2.4" width="2" height="4.8" fill="#d2450c"/>   </g></svg><div class="t" style="right:1102px;top:8.10px;font-size:15px;line-height:15px;color:#333;font-weight:400;">9</div><div class="t" style="left:525px;top:8.10px;font-size:15px;line-height:15px;color:#333;font-weight:400;letter-spacing:0.45px">LTR</div><div class="t" style="left:744px;top:8.10px;font-size:15px;line-height:15px;color:#333;font-weight:400;letter-spacing:0.45px">admin</div><div class="t" style="left:963px;top:8.10px;font-size:15px;line-height:15px;color:#333;font-weight:400;letter-spacing:0.15px">08-04-2020 09:09:18</div></div>
<div class="tr alt" style="top:288px"><div class="t" style="left:6px;top:8.10px;font-size:15px;line-height:15px;color:#333;font-weight:400;">10</div><svg class="edit" style="left:131px;top:9px" width="17" height="17" viewBox="0 0 17 17" overflow="visible"><path d="M0.7 0.7H9.3 M0.7 0.7V15.3H15.3V7.5" fill="none" stroke="#0b3d8e" stroke-width="1.4"/>   <path d="M1.4 1.4H9.3L15 7.5V14.6H1.4Z" fill="#b4dbf7"/>   <path d="M0.7 0.7H9.3V6" fill="none" stroke="#0b3d8e" stroke-width="1.4"/>   <rect x="2.6" y="2.6" width="2.6" height="1.4" fill="#33507a"/>   <rect x="2.6" y="5.6" width="2.6" height="1.4" fill="#0b2a60"/>   <rect x="2.6" y="8.6" width="1.6" height="1.4" fill="#33507a"/>   <rect x="9.8" y="12" width="2.6" height="1.4" fill="#33507a"/>   <g transform="translate(3.3 13.6) rotate(-41)">    <path d="M0 0L3.4 -2.4V2.4Z" fill="#000"/>    <rect x="3.4" y="-2.4" width="10.6" height="4.8" fill="url(#pg)" stroke="#e0520e" stroke-width="0.9"/>    <rect x="12" y="-2.4" width="2" height="4.8" fill="#d2450c"/>   </g></svg><div class="t" style="right:1102px;top:8.10px;font-size:15px;line-height:15px;color:#333;font-weight:400;">10</div><div class="t" style="left:525px;top:8.10px;font-size:15px;line-height:15px;color:#333;font-weight:400;letter-spacing:0.45px">LTRS</div><div class="t" style="left:744px;top:8.10px;font-size:15px;line-height:15px;color:#333;font-weight:400;letter-spacing:0.45px">admin</div><div class="t" style="left:963px;top:8.10px;font-size:15px;line-height:15px;color:#333;font-weight:400;letter-spacing:0.15px">08-04-2020 09:09:50</div></div>
<div class="tr" style="top:320px"><div class="t" style="left:6px;top:8.10px;font-size:15px;line-height:15px;color:#333;font-weight:400;">11</div><svg class="edit" style="left:131px;top:9px" width="17" height="17" viewBox="0 0 17 17" overflow="visible"><path d="M0.7 0.7H9.3 M0.7 0.7V15.3H15.3V7.5" fill="none" stroke="#0b3d8e" stroke-width="1.4"/>   <path d="M1.4 1.4H9.3L15 7.5V14.6H1.4Z" fill="#b4dbf7"/>   <path d="M0.7 0.7H9.3V6" fill="none" stroke="#0b3d8e" stroke-width="1.4"/>   <rect x="2.6" y="2.6" width="2.6" height="1.4" fill="#33507a"/>   <rect x="2.6" y="5.6" width="2.6" height="1.4" fill="#0b2a60"/>   <rect x="2.6" y="8.6" width="1.6" height="1.4" fill="#33507a"/>   <rect x="9.8" y="12" width="2.6" height="1.4" fill="#33507a"/>   <g transform="translate(3.3 13.6) rotate(-41)">    <path d="M0 0L3.4 -2.4V2.4Z" fill="#000"/>    <rect x="3.4" y="-2.4" width="10.6" height="4.8" fill="url(#pg)" stroke="#e0520e" stroke-width="0.9"/>    <rect x="12" y="-2.4" width="2" height="4.8" fill="#d2450c"/>   </g></svg><div class="t" style="right:1102px;top:8.10px;font-size:15px;line-height:15px;color:#333;font-weight:400;">11</div><div class="t" style="left:525px;top:8.10px;font-size:15px;line-height:15px;color:#333;font-weight:400;letter-spacing:0.45px">new</div><div class="t" style="left:744px;top:8.10px;font-size:15px;line-height:15px;color:#333;font-weight:400;letter-spacing:0.45px">admin</div><div class="t" style="left:963px;top:8.10px;font-size:15px;line-height:15px;color:#333;font-weight:400;letter-spacing:0.15px">21-04-2020 18:35:25</div></div>
<div class="tr alt" style="top:352px"><div class="t" style="left:6px;top:8.10px;font-size:15px;line-height:15px;color:#333;font-weight:400;">12</div><svg class="edit" style="left:131px;top:9px" width="17" height="17" viewBox="0 0 17 17" overflow="visible"><path d="M0.7 0.7H9.3 M0.7 0.7V15.3H15.3V7.5" fill="none" stroke="#0b3d8e" stroke-width="1.4"/>   <path d="M1.4 1.4H9.3L15 7.5V14.6H1.4Z" fill="#b4dbf7"/>   <path d="M0.7 0.7H9.3V6" fill="none" stroke="#0b3d8e" stroke-width="1.4"/>   <rect x="2.6" y="2.6" width="2.6" height="1.4" fill="#33507a"/>   <rect x="2.6" y="5.6" width="2.6" height="1.4" fill="#0b2a60"/>   <rect x="2.6" y="8.6" width="1.6" height="1.4" fill="#33507a"/>   <rect x="9.8" y="12" width="2.6" height="1.4" fill="#33507a"/>   <g transform="translate(3.3 13.6) rotate(-41)">    <path d="M0 0L3.4 -2.4V2.4Z" fill="#000"/>    <rect x="3.4" y="-2.4" width="10.6" height="4.8" fill="url(#pg)" stroke="#e0520e" stroke-width="0.9"/>    <rect x="12" y="-2.4" width="2" height="4.8" fill="#d2450c"/>   </g></svg><div class="t" style="right:1102px;top:8.10px;font-size:15px;line-height:15px;color:#333;font-weight:400;">12</div><div class="t" style="left:525px;top:8.10px;font-size:15px;line-height:15px;color:#333;font-weight:400;letter-spacing:0.45px">kgS</div><div class="t" style="left:744px;top:8.10px;font-size:15px;line-height:15px;color:#333;font-weight:400;letter-spacing:0.45px">admin</div><div class="t" style="left:963px;top:8.10px;font-size:15px;line-height:15px;color:#333;font-weight:400;letter-spacing:0.15px">02-05-2020 15:27:20</div></div>
<div class="tr" style="top:384px"><div class="t" style="left:6px;top:8.10px;font-size:15px;line-height:15px;color:#333;font-weight:400;">13</div><svg class="edit" style="left:131px;top:9px" width="17" height="17" viewBox="0 0 17 17" overflow="visible"><path d="M0.7 0.7H9.3 M0.7 0.7V15.3H15.3V7.5" fill="none" stroke="#0b3d8e" stroke-width="1.4"/>   <path d="M1.4 1.4H9.3L15 7.5V14.6H1.4Z" fill="#b4dbf7"/>   <path d="M0.7 0.7H9.3V6" fill="none" stroke="#0b3d8e" stroke-width="1.4"/>   <rect x="2.6" y="2.6" width="2.6" height="1.4" fill="#33507a"/>   <rect x="2.6" y="5.6" width="2.6" height="1.4" fill="#0b2a60"/>   <rect x="2.6" y="8.6" width="1.6" height="1.4" fill="#33507a"/>   <rect x="9.8" y="12" width="2.6" height="1.4" fill="#33507a"/>   <g transform="translate(3.3 13.6) rotate(-41)">    <path d="M0 0L3.4 -2.4V2.4Z" fill="#000"/>    <rect x="3.4" y="-2.4" width="10.6" height="4.8" fill="url(#pg)" stroke="#e0520e" stroke-width="0.9"/>    <rect x="12" y="-2.4" width="2" height="4.8" fill="#d2450c"/>   </g></svg><div class="t" style="right:1102px;top:8.10px;font-size:15px;line-height:15px;color:#333;font-weight:400;">13</div><div class="t" style="left:525px;top:8.10px;font-size:15px;line-height:15px;color:#333;font-weight:400;letter-spacing:0.45px">Carton</div><div class="t" style="left:744px;top:8.10px;font-size:15px;line-height:15px;color:#333;font-weight:400;letter-spacing:0.45px">admin</div><div class="t" style="left:963px;top:8.10px;font-size:15px;line-height:15px;color:#333;font-weight:400;letter-spacing:0.15px">30-07-2020 11:49:06</div></div>
<div class="tr alt" style="top:416px"><div class="t" style="left:6px;top:8.10px;font-size:15px;line-height:15px;color:#333;font-weight:400;">14</div><svg class="edit" style="left:131px;top:9px" width="17" height="17" viewBox="0 0 17 17" overflow="visible"><path d="M0.7 0.7H9.3 M0.7 0.7V15.3H15.3V7.5" fill="none" stroke="#0b3d8e" stroke-width="1.4"/>   <path d="M1.4 1.4H9.3L15 7.5V14.6H1.4Z" fill="#b4dbf7"/>   <path d="M0.7 0.7H9.3V6" fill="none" stroke="#0b3d8e" stroke-width="1.4"/>   <rect x="2.6" y="2.6" width="2.6" height="1.4" fill="#33507a"/>   <rect x="2.6" y="5.6" width="2.6" height="1.4" fill="#0b2a60"/>   <rect x="2.6" y="8.6" width="1.6" height="1.4" fill="#33507a"/>   <rect x="9.8" y="12" width="2.6" height="1.4" fill="#33507a"/>   <g transform="translate(3.3 13.6) rotate(-41)">    <path d="M0 0L3.4 -2.4V2.4Z" fill="#000"/>    <rect x="3.4" y="-2.4" width="10.6" height="4.8" fill="url(#pg)" stroke="#e0520e" stroke-width="0.9"/>    <rect x="12" y="-2.4" width="2" height="4.8" fill="#d2450c"/>   </g></svg><div class="t" style="right:1102px;top:8.10px;font-size:15px;line-height:15px;color:#333;font-weight:400;">14</div><div class="t" style="left:525px;top:8.10px;font-size:15px;line-height:15px;color:#333;font-weight:400;letter-spacing:0.45px">CASE</div><div class="t" style="left:744px;top:8.10px;font-size:15px;line-height:15px;color:#333;font-weight:400;letter-spacing:0.45px">admin</div><div class="t" style="left:963px;top:8.10px;font-size:15px;line-height:15px;color:#333;font-weight:400;letter-spacing:0.15px">17-08-2020 14:50:07</div></div>
<div class="vl2" style="left:125px"></div>
<div class="vl2" style="left:300px"></div>
<div class="vl2" style="left:519px"></div>
<div class="vl2" style="left:738px"></div>
<div class="vl2" style="left:957px"></div>
<div class="vl2" style="left:1175px"></div>
<div class="vl2" style="left:1394px"></div>
 </div>
</div>
<div id="tfoot">
<div class="vl3" style="left:124px"></div>
<div class="vl3" style="left:299px"></div>
<div class="vl3" style="left:518px"></div>
<div class="vl3" style="left:737px"></div>
<div class="vl3" style="left:956px"></div>
<div class="vl3" style="left:1174px"></div>
<div class="vl3" style="left:1393px"></div>
</div>
<div class="t" style="left:91px;top:884.00px;font-size:15px;line-height:15px;color:#222;font-weight:700;letter-spacing:0.6px">NetTotal</div>
<div class="redbox" style="left:200px;top:460px;width:44px;height:41px"></div>
<div class="abs" style="left:84px;top:935px;width:196px;height:37px;border:1px solid #ddd;border-radius:4px 0 0 4px;background:#f9f9f9"></div>
<div class="abs" style="left:125px;top:935px;width:1px;height:37px;background:#ddd"></div>
<div class="abs" style="left:238px;top:935px;width:1px;height:37px;background:#ddd"></div>
<div class="abs" style="left:162px;top:935px;width:39px;height:37px;background:#3c8dbc"></div>
<div class="t" style="left:100px;top:943.92px;font-size:19px;line-height:19px;color:#777;font-weight:400;">«</div>
<div class="t" style="left:141px;top:943.92px;font-size:19px;line-height:19px;color:#777;font-weight:400;">‹</div>
<div class="t" style="left:177.5px;top:946.30px;font-size:15px;line-height:15px;color:#fff;font-weight:400;">1</div>
<div class="t" style="left:217px;top:943.92px;font-size:19px;line-height:19px;color:#777;font-weight:400;">›</div>
<div class="t" style="left:254px;top:943.92px;font-size:19px;line-height:19px;color:#777;font-weight:400;">»</div>
<div class="abs" style="left:295px;top:935px;width:50px;height:37px;border:1px solid #ccc;border-radius:6px;background:#fff"></div>
<div class="t" style="left:305.5px;top:946.30px;font-size:15px;line-height:15px;color:#555;font-weight:400;">1</div>
<div class="abs" style="left:349px;top:935px;width:37px;height:38px;border-radius:3px;background:#3c8dbc"></div>
<div class="t" style="left:357px;top:946.00px;font-size:15px;line-height:15px;color:#fff;font-weight:400;letter-spacing:0.5px">Go</div>
<div class="t" style="left:1320px;top:955.05px;font-size:14px;line-height:14px;color:#333;font-weight:700;">Query Execution: 2 ms</div>
<div class="t" style="left:1644px;top:955.05px;font-size:14px;line-height:14px;color:#333;font-weight:700;">Total: 29 Record(s)</div>
<div class="abs" style="left:1782px;top:943px;width:106px;height:38px;border:1px solid #ccc;background:#fff"></div>
<div class="t" style="left:1789px;top:955.55px;font-size:14px;line-height:14px;color:#444;font-weight:400;">50 per page</div>
<div class="abs" style="left:1893px;top:432px;width:6px;height:437px;background:#d3d6da;border-radius:3px"></div>
<div class="abs" style="left:1892px;top:432px;width:7.5px;height:207px;background:#858a90;border-radius:4px"></div>

<div id="foot"></div>
<div class="t" style="left:19px;top:995.90px;font-size:15px;line-height:15px;color:#4a5566;font-weight:400;letter-spacing:0.27px">Copyright © 2019. All rights reserved</div>

<div id="task"><div id="taskin">
<div style="left:0px;top:0px;width:2040px;height:160px;background:#0e3476;"></div>
<div style="left:0px;top:0px;width:2040px;height:46px;background:#6d87b2;"></div>
<div style="left:1270px;top:48px;width:140px;height:90px;background:#0a3fa0;border-radius:45px"></div>
<div style="left:960px;top:50px;width:300px;height:80px;background:#0d3a86;border-radius:40px"></div>
<div style="left:1660px;top:46px;width:300px;height:10px;background:#4a6a98;border-radius:5px"></div>
<div style="left:60px;top:52px;width:640px;height:70px;background:#12397c;"></div>
<div style="left:84px;top:56px;width:26px;height:24px;background:#3a8ccc;border-radius:8px"></div>
<div style="left:142px;top:56px;width:26px;height:24px;background:#44608c;border-radius:8px"></div>
<div style="left:197px;top:56px;width:26px;height:24px;background:#7a8a50;border-radius:8px"></div>
<div style="left:252px;top:56px;width:26px;height:24px;background:#7f8060;border-radius:8px"></div>
<div style="left:307px;top:56px;width:26px;height:24px;background:#6a3060;border-radius:8px"></div>
<div style="left:362px;top:56px;width:26px;height:24px;background:#4a8a58;border-radius:8px"></div>
<div style="left:414px;top:56px;width:26px;height:24px;background:#6f86b0;border-radius:8px"></div>
<div style="left:472px;top:56px;width:26px;height:24px;background:#1d3c72;border-radius:8px"></div>
<div style="left:527px;top:56px;width:26px;height:24px;background:#7a5088;border-radius:8px"></div>
<div style="left:584px;top:56px;width:26px;height:24px;background:#687860;border-radius:8px"></div>
<div style="left:637px;top:56px;width:26px;height:24px;background:#3f86b8;border-radius:8px"></div>
</div><div style="position:absolute;left:1918px;top:0;width:2px;height:60px;background:#0a2a66"></div></div>
</body></html>
